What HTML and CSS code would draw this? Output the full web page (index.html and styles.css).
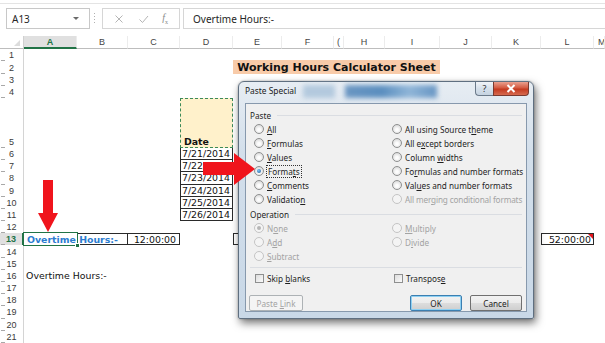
FILE: index.html
```html
<!DOCTYPE html>
<html>
<head>
<meta charset="utf-8">
<link rel="stylesheet" href="styles.css">
</head>
<body>
<div class="app">
  <div class="top"></div>
  <div class="fbar">
    <div class="namebox"><span>A13</span><span class="dd"></span></div>
    <div class="dots"></div>
    <div class="fbtns">
      <svg class="ic" viewBox="0 0 10 10" width="10" height="10"><path d="M1.5 1.5 L8.5 8.5 M8.5 1.5 L1.5 8.5" stroke="#b5b5b5" stroke-width="1" fill="none"/></svg>
      <svg class="ic" viewBox="0 0 10 10" width="11" height="10"><path d="M1 5.5 L4 8.5 L9.5 2" stroke="#b5b5b5" stroke-width="1" fill="none"/></svg>
      <span class="fx"><i>f</i><sub>x</sub></span>
    </div>
    <div class="finput">Overtime Hours:-</div>
  </div>

  <div class="sheet">
    <div class="ch corner"><span class="tri"></span></div>
    <div class="ch sel">A</div>
    <div class="ch">B</div>
    <div class="ch">C</div>
    <div class="ch">D</div>
    <div class="ch">E</div>
    <div class="ch">F</div>
    <div class="ch">(</div>
    <div class="ch">H</div>
    <div class="ch">I</div>
    <div class="ch">J</div>
    <div class="ch">K</div>
    <div class="ch">L</div>
    <div class="ch last">M</div>

    <div class="rh">1</div>
    <div class="rh">2</div>
    <div class="rh">3</div>
    <div class="rh">4</div>
    <div class="rh bottom">5</div>
    <div class="rh">6</div>
    <div class="rh">7</div>
    <div class="rh">8</div>
    <div class="rh">9</div>
    <div class="rh">10</div>
    <div class="rh">11</div>
    <div class="rh">12</div>
    <div class="rh sel">13</div>
    <div class="rh">14</div>
    <div class="rh">15</div>
    <div class="rh">16</div>
    <div class="rh">17</div>
    <div class="rh">18</div>
    <div class="rh">19</div>
    <div class="rh">20</div>
    <div class="rh">21</div>

    <div class="cell title">Working Hours Calculator Sheet</div>
    <div class="cell d5">Date</div>
    <div class="cell dt r6">7/21/2014</div>
    <div class="cell dt r7">7/22/2014</div>
    <div class="cell dt r8">7/23/2014</div>
    <div class="cell dt r9">7/24/2014</div>
    <div class="cell dt r10">7/25/2014</div>
    <div class="cell dt r11">7/26/2014</div>

    <div class="cell b13"></div>
    <div class="cell c13">12:00:00</div>
    <div class="cell e13"></div>
    <div class="cell l13">52:00:00</div>
    <div class="cell a13">Overtime Hours:-<span class="handle"></span></div>
    <div class="cell a16">Overtime Hours:-</div>
  </div>

  <svg class="arrow-down" viewBox="0 0 24 53" width="24" height="53"><polygon points="7,0 17,0 17,33 22,33 12,52 2,33 7,33" fill="#f0141c"/></svg>
  <svg class="arrow-right" viewBox="0 0 53 33" width="53" height="33"><polygon points="0,9 31,9 31,0 52,16 31,32 31,22 0,22" fill="#f0141c"/></svg>

  <div class="dlg">
    <div class="dlg-title">
      <span class="dlg-name">Paste Special</span>
      <span class="blur b1"></span>
      <span class="blur b2"></span>
      <div class="tbtns">
        <span class="tb help">?</span>
        <span class="tb close">
          <svg viewBox="0 0 10 9" width="10" height="9"><path d="M1.5 1 L8.5 8 M8.5 1 L1.5 8" stroke="#fff" stroke-width="2" fill="none"/></svg>
        </span>
      </div>
    </div>
    <div class="dlg-body">
      <div class="legend"><span>Paste</span></div>
      <div class="opts">
        <div class="opt"><i class="radio"></i><span><u>A</u>ll</span></div>
        <div class="opt"><i class="radio"></i><span>All using Source t<u>h</u>eme</span></div>
        <div class="opt"><i class="radio"></i><span><u>F</u>ormulas</span></div>
        <div class="opt"><i class="radio"></i><span>All e<u>x</u>cept borders</span></div>
        <div class="opt"><i class="radio"></i><span><u>V</u>alues</span></div>
        <div class="opt"><i class="radio"></i><span>Column <u>w</u>idths</span></div>
        <div class="opt"><i class="radio on"></i><span class="focus">Forma<u>t</u>s</span></div>
        <div class="opt"><i class="radio"></i><span>Fo<u>r</u>mulas and number formats</span></div>
        <div class="opt"><i class="radio"></i><span><u>C</u>omments</span></div>
        <div class="opt"><i class="radio"></i><span>Val<u>u</u>es and number formats</span></div>
        <div class="opt"><i class="radio"></i><span>Validatio<u>n</u></span></div>
        <div class="opt dis"><i class="radio"></i><span class="tight">All mer<u>g</u>ing conditional formats</span></div>
      </div>
      <div class="legend"><span>Operation</span></div>
      <div class="opts">
        <div class="opt dis"><i class="radio dot"></i><span>N<u>o</u>ne</span></div>
        <div class="opt dis"><i class="radio"></i><span><u>M</u>ultiply</span></div>
        <div class="opt dis"><i class="radio"></i><span>A<u>d</u>d</span></div>
        <div class="opt dis"><i class="radio"></i><span>D<u>i</u>vide</span></div>
        <div class="opt dis"><i class="radio"></i><span><u>S</u>ubtract</span></div>
        <div class="opt"></div>
      </div>
      <div class="sep"></div>
      <div class="opts checks">
        <div class="opt"><i class="check"></i><span>Skip <u>b</u>lanks</span></div>
        <div class="opt"><i class="check"></i><span>Transpos<u>e</u></span></div>
      </div>
      <div class="btns">
        <span class="btn disabled"><span>Paste <u>L</u>ink</span></span>
        <span class="grow"></span>
        <span class="btn def">OK</span>
        <span class="btn">Cancel</span>
      </div>
    </div>
  </div>
</div>
</body>
</html>
```

FILE: styles.css
```css
* { box-sizing: border-box; margin: 0; padding: 0; }
html, body { width: 605px; height: 343px; overflow: hidden; background: #fff; }
body { font-family: "DejaVu Sans", sans-serif; }
.app { position: relative; width: 605px; height: 343px; overflow: hidden; background: #fff; }

.top { margin-top: 3px; height: 5px; border-top: 1px solid #e4e4e4; }

.fbar { display: flex; height: 21px; padding-left: 6px; font-family: "Noto Sans", sans-serif; }
.namebox { width: 84px; border: 1px solid #c8c8c8; display: flex; align-items: center; justify-content: space-between; padding: 0 10px 0 5px; font-size: 10px; color: #262626; }
.dd { width: 0; height: 0; border-left: 3px solid transparent; border-right: 3px solid transparent; border-top: 3px solid #6a6a6a; }
.dots { width: 12px; position: relative; }
.dots::before { content: ""; position: absolute; left: 4px; top: 5px; width: 1px; height: 10px; background: repeating-linear-gradient(#b0b0b0 0 1px, transparent 1px 3px); }
.fbtns { width: 78px; border: 1px solid #d6d6d6; display: flex; align-items: center; justify-content: space-around; padding: 0 4px; }
.fx { font-family: "Liberation Serif", serif; font-size: 10px; color: #8a8a8a; }
.fx sub { font-size: 6px; }
.finput { flex: 1; margin-left: 3px; border: 1px solid #d6d6d6; border-right: none; padding-left: 9px; font-size: 10px; color: #262626; display: flex; align-items: center; }

.sheet {
  margin-top: 7px;
  display: grid;
  grid-template-columns: 24px 53px 51px 52px 53px 49px 52px 10px 41px 55px 52px 49px 53px 11px;
  grid-template-rows: 13px 12.2px 12.8px 12.2px 12.2px 49.6px repeat(16, 12.2px);
}
.ch { grid-row: 1; font-family: "Liberation Sans", sans-serif; font-size: 9px; color: #444; display: flex; align-items: center; justify-content: center; border-bottom: 1px solid #bdbdbd; border-right: 1px solid #ececec; }
.ch.last { justify-content: flex-start; padding-left: 4px; overflow: hidden; }
.ch.sel { background: #e0e0e0; color: #217346; border-bottom: 2px solid #217346; font-weight: bold; }
.corner { justify-content: flex-end; align-items: flex-end; padding: 0 3px 2px 0; border-right: 1px solid #d0d0d0; }
.tri { width: 0; height: 0; border-left: 6px solid transparent; border-bottom: 6px solid #dcdcdc; }

.rh { grid-column: 1; font-family: "Liberation Sans", sans-serif; font-size: 9px; color: #3a3a3a; display: flex; align-items: center; justify-content: center; border-right: 1px solid #d4d4d4; position: relative; }
.rh::after { content: ""; position: absolute; left: 1px; bottom: 0; width: 4px; height: 1px; background: #a8a8a8; }
.rh.bottom { align-items: flex-end; padding-bottom: 1px; }
.rh.sel { background: #e0e0e0; color: #217346; font-weight: bold; border-right: 2px solid #217346; }

.cell { font-size: 9.4px; line-height: 11px; color: #111; white-space: nowrap; display: flex; align-items: center; }
.title { grid-row: 3; grid-column: 6 / 11; background: #f8cba9; justify-content: center; font-weight: bold; font-size: 11px; color: #111; margin-top: -1px; }
.d5 { grid-row: 6; grid-column: 5; background: #fff1cb; border: 1px dashed #3c8a58; align-items: flex-end; padding: 0 0 0 3px; font-weight: bold; }
.dt { grid-column: 5; border: 1px solid #2a2a2a; border-top: none; justify-content: flex-end; padding-right: 2px; }
.r6 { grid-row: 7; }
.r7 { grid-row: 8; }
.r8 { grid-row: 9; }
.r9 { grid-row: 10; }
.r10 { grid-row: 11; }
.r11 { grid-row: 12; }

.a13 { grid-row: 14; grid-column: 2; outline: 1.5px solid #217346; outline-offset: -0.5px; color: #2b7cd0; font-weight: bold; padding-left: 3px; position: relative; z-index: 2; }
.handle { position: absolute; right: -3px; bottom: -3px; width: 5px; height: 5px; background: #217346; border: 1px solid #fff; }
.b13 { grid-row: 14; grid-column: 3; border: 1px solid #2a2a2a; border-left: none; }
.c13 { grid-row: 14; grid-column: 4; border: 1px solid #2a2a2a; border-left: none; justify-content: flex-end; padding-right: 3px; }
.e13 { grid-row: 14; grid-column: 6; border: 1px solid #2a2a2a; border-right: none; }
.l13 { grid-row: 14; grid-column: 13; border: 1px solid #2a2a2a; justify-content: flex-end; padding-right: 2px; position: relative; }
.l13::after { content: ""; position: absolute; right: 0; top: 0; width: 0; height: 0; border-left: 5px solid transparent; border-top: 5px solid #e0141c; }
.a16 { grid-row: 17; grid-column: 2; padding-left: 2px; }

.arrow-down { position: absolute; left: 36px; top: 180px; }
.arrow-right { position: absolute; left: 203px; top: 153px; z-index: 5; }

/* Dialog */
.dlg { position: absolute; left: 238px; top: 81px; width: 296px; height: 238px; border: 1px solid #5f6f80; border-radius: 6px 6px 2px 2px;
  background: linear-gradient(#e7edf3, #d3dfeb 30%, #c9d8e7);
  box-shadow: 2px 4px 9px rgba(0,0,0,0.55), 0 0 2px rgba(0,0,0,0.3);
  display: flex; flex-direction: column; padding: 0 6px 6px 6px; font-family: "Noto Sans", sans-serif; z-index: 4; }
.dlg-title { height: 21px; display: flex; align-items: flex-start; position: relative; }
.dlg-name { font-size: 8.4px; color: #1a1a1a; padding-top: 3px; }
.blur { position: absolute; top: 3px; height: 13px; filter: blur(2.5px); }
.b1 { left: 58px; width: 32px; background: #b3c9de; }
.b2 { left: 100px; width: 92px; background: linear-gradient(90deg, #6a96c2, #5a8ebf 40%, #8fb5d8 70%, #6795c3); }
.tbtns { position: absolute; right: -2px; top: 0; display: flex; }
.tb { height: 14px; display: flex; align-items: center; justify-content: center; border: 1px solid #6b7a8a; border-top: none; }
.help { width: 18px; border-radius: 0 0 0 4px; background: linear-gradient(#f1f4f8, #d6e0ea 50%, #c5d3e1); font-size: 9px; color: #333; border-right: none; }
.close { width: 36px; border-radius: 0 0 4px 0; background: linear-gradient(#e9a08f, #d45a41 45%, #c43a20 55%, #d66a4f); border-color: #7a3a30; }

.dlg-body { flex: 1; background: #f0f0f0; border: 1px solid #8799ad; padding: 3px 4px 0 3px; font-size: 8.2px; color: #1e1e1e; display: flex; flex-direction: column; }
.legend { height: 14px; display: flex; align-items: center; gap: 4px; padding-left: 1px; margin-top: 1px; }
.legend::after { content: ""; flex: 1; height: 1px; background: #dadde2; margin-left: 2px; }
.opts { display: grid; grid-template-columns: 138px 1fr; grid-auto-rows: 14px; padding-left: 5px; }
.opt { display: flex; align-items: center; gap: 3px; white-space: nowrap; }
.opt.dis { color: #a3a3a3; }
.tight { letter-spacing: -0.15px; }
.radio { width: 10px; height: 10px; border-radius: 50%; border: 1px solid #8e8f8f; background: radial-gradient(circle at 50% 60%, #fdfdfd 20%, #dcdcdc 75%); flex: none; position: relative; }
.dis .radio { border-color: #c4c4c4; background: #f4f4f4; }
.radio.on::after { content: ""; position: absolute; left: 2px; top: 2px; width: 4px; height: 4px; border-radius: 50%; background: radial-gradient(circle at 40% 35%, #7cc0f0, #1b5c9e); }
.radio.dot::after { content: ""; position: absolute; left: 2px; top: 2px; width: 4px; height: 4px; border-radius: 50%; background: #b5b5b5; }
.focus { outline: 1px dotted #333; outline-offset: 0; padding: 0 1px; }
.sep { height: 1px; background: #dadde2; margin: 4px 0 3px 1px; }
.checks { padding-left: 6px; }
.checks .opt:nth-child(2) { margin-left: 1px; }
.check { width: 9px; height: 9px; border: 1px solid #8e8f8f; background: linear-gradient(135deg, #dcdcdc, #fbfbfb); flex: none; }
.btns { display: flex; gap: 8px; margin-top: 10px; height: 16px; }
.grow { flex: 1; }
.btn { width: 52px; display: flex; align-items: center; justify-content: center; border: 1px solid #707070; border-radius: 2px; background: linear-gradient(#f2f2f2, #ebebeb 50%, #dddddd 51%, #cfcfcf); font-size: 8.2px; color: #1e1e1e; }
.btn.disabled { width: 54px; border-color: #adb2b5; background: #f4f4f4; color: #a3a3a3; }
.btn.def { border-color: #3c7fb1; box-shadow: inset 0 0 0 1px #8ed0f2; }
```
